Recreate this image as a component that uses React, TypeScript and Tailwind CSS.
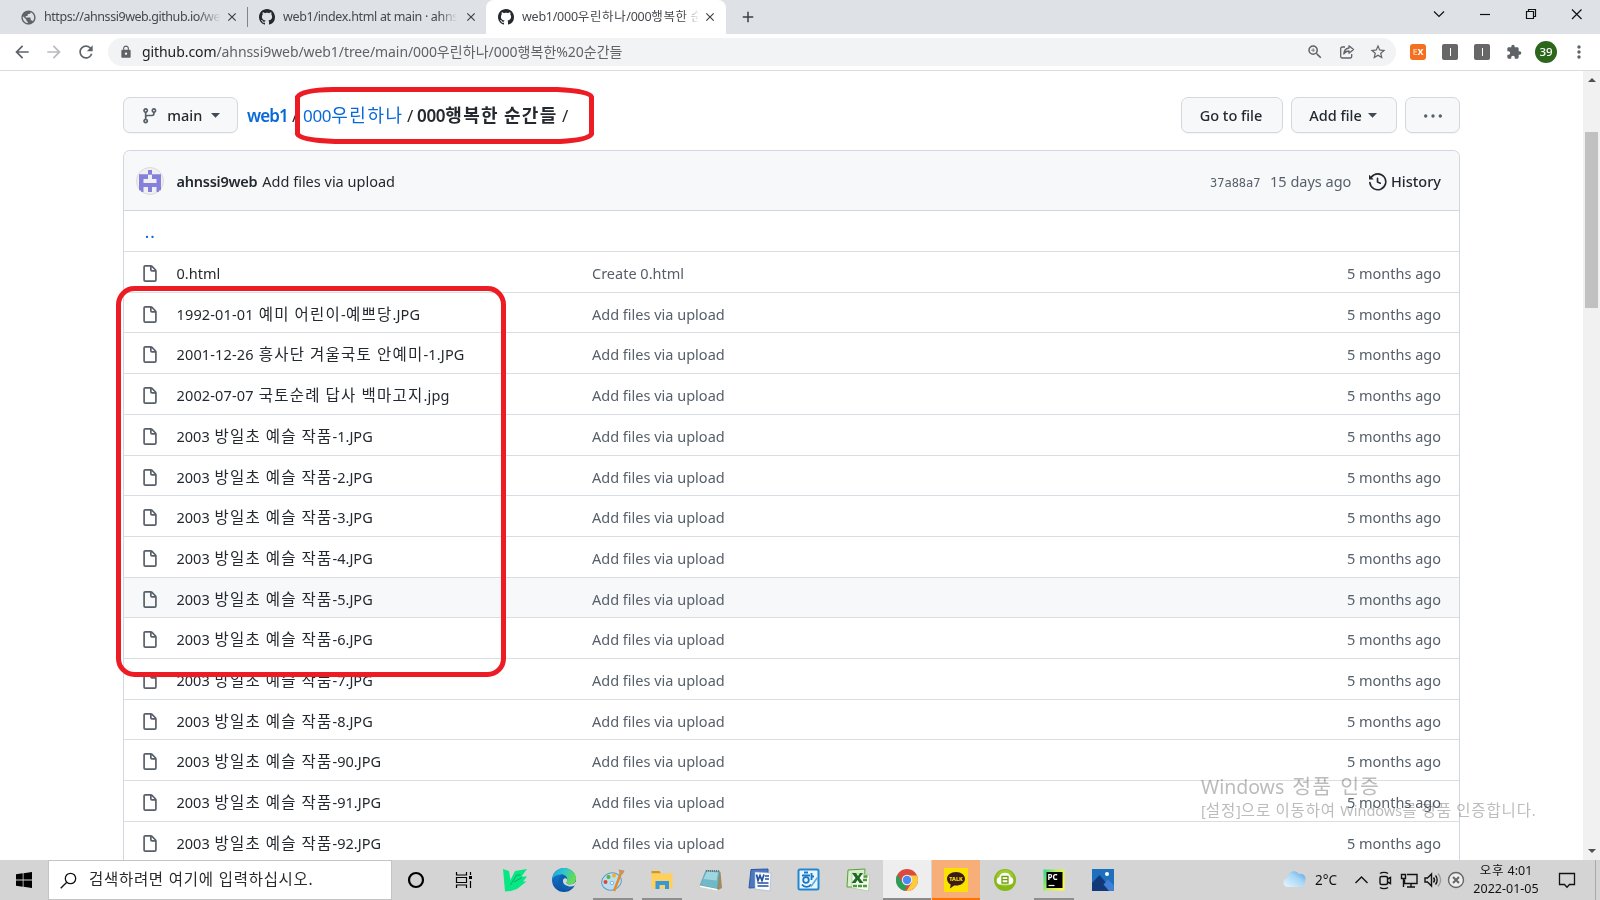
import React from "react";
import {
  MdArrowBack, MdArrowForward, MdClose, MdExtension, MdLock, MdMoreVert,
  MdAdd, MdPublic, MdRefresh, MdStarBorder, MdZoomIn,
} from "react-icons/md";

const FILE_PATH =
  "M3.75 1.5a.25.25 0 00-.25.25v11.5c0 .138.112.25.25.25h8.5a.25.25 0 00.25-.25V6H9.75A1.75 1.75 0 018 4.25V1.5H3.75zm5.75.56v2.19c0 .138.112.25.25.25h2.19L9.5 2.06zM2 1.75C2 .784 2.784 0 3.75 0h5.086c.464 0 .909.184 1.237.513l3.414 3.414c.329.328.513.773.513 1.237v8.086A1.75 1.75 0 0112.25 15h-8.5A1.75 1.75 0 012 13.25V1.75z";
const BRANCH_PATH =
  "M11.75 2.5a.75.75 0 100 1.5.75.75 0 000-1.5zm-2.25.75a2.25 2.25 0 113 2.122V6A2.5 2.5 0 0110 8.5H6a1 1 0 00-1 1v1.128a2.251 2.251 0 11-1.5 0V5.372a2.25 2.25 0 111.5 0v1.836A2.492 2.492 0 016 7h4a1 1 0 001-1v-.628A2.25 2.25 0 019.5 3.25zM4.25 12a.75.75 0 100 1.5.75.75 0 000-1.5zM3.5 3.25a.75.75 0 111.5 0 .75.75 0 01-1.5 0z";
const HISTORY_PATH =
  "M1.643 3.143L.427 1.927A.25.25 0 000 2.104V5.75c0 .138.112.25.25.25h3.646a.25.25 0 00.177-.427L2.715 4.215a6.5 6.5 0 11-1.18 4.458.75.75 0 10-1.493.154 8.001 8.001 0 101.6-5.684zM7.75 4a.75.75 0 01.75.75v2.992l2.028.812a.75.75 0 01-.557 1.392l-2.5-1A.75.75 0 017 8.25v-3.5A.75.75 0 017.75 4z";
const GITHUB_PATH =
  "M8 0C3.58 0 0 3.58 0 8c0 3.54 2.29 6.53 5.47 7.59.4.07.55-.17.55-.38 0-.19-.01-.82-.01-1.49-2.01.37-2.53-.49-2.69-.94-.09-.23-.48-.94-.82-1.13-.28-.15-.68-.52-.01-.53.63-.01 1.08.58 1.23.82.72 1.21 1.87.87 2.33.66.07-.52.28-.87.51-1.07-1.78-.2-3.64-.89-3.64-3.95 0-.87.31-1.59.82-2.15-.08-.2-.36-1.02.08-2.12 0 0 .67-.21 2.2.82.64-.18 1.32-.27 2-.27.68 0 1.36.09 2 .27 1.53-1.04 2.2-.82 2.2-.82.44 1.1.16 1.92.08 2.12.51.56.82 1.27.82 2.15 0 3.07-1.87 3.75-3.65 3.95.29.25.54.73.54 1.48 0 1.07-.01 1.93-.01 2.2 0 .21.15.46.55.38A8.013 8.013 0 0016 8c0-4.42-3.58-8-8-8z";

function Octicon({ d, className }: { d: string; className: string }) {
  return (
    <svg viewBox="0 0 16 16" fill="currentColor" fillRule="evenodd" className={className}>
      <path d={d} />
    </svg>
  );
}

/* Hangul runs are set a little wider than the Latin text around them. */
function Mixed({ text, hangul }: { text: string; hangul: string }) {
  return (
    <>
      {text.split(/([\uac00-\ud7a3]+)/).map((part, i) =>
        i % 2 ? <span key={i} className={hangul}>{part}</span> : part
      )}
    </>
  );
}

/* ---------- browser chrome ---------- */

function TabStrip() {
  return (
    <div className="flex h-[34px] shrink-0 items-stretch bg-[#dee1e6] text-[12.5px] text-[#45494d]">
      <div className="flex w-[247px] items-center pl-5">
        <MdPublic className="size-[17px] shrink-0 text-[#5f6368]" />
        <span className="ml-[7px] w-[177px] overflow-hidden whitespace-nowrap tracking-[-0.450px] [mask-image:linear-gradient(to_right,black_88%,transparent)]">
          https://ahnssi9web.github.io/web1
        </span>
        <MdClose className="ml-1 size-[14px] shrink-0 text-[#3c4043]" stroke="currentColor" />
      </div>
      <div className="my-[7px] w-px bg-[#80868b]" />
      <div className="flex w-[238px] items-center pl-[11px]">
        <Octicon d={GITHUB_PATH} className="size-4 shrink-0 text-[#24292f]" />
        <span className="ml-2 w-[174px] overflow-hidden whitespace-nowrap tracking-[-0.330px] [mask-image:linear-gradient(to_right,black_90%,transparent)]">
          web1/index.html at main · ahnssi9web
        </span>
        <MdClose className="ml-[7px] size-[14px] shrink-0 text-[#3c4043]" stroke="currentColor" />
      </div>
      <div className="flex w-[240px] items-center rounded-t-[8px] bg-white pl-3">
        <Octicon d={GITHUB_PATH} className="size-4 shrink-0 text-[#24292f]" />
        <span className="ml-2 w-[177px] overflow-hidden whitespace-nowrap tracking-[-0.250px] [mask-image:linear-gradient(to_right,black_91%,transparent)]">
          <Mixed text="web1/000우린하나/000행복한 순간들" hangul="tracking-[0.600px]" />
        </span>
        <MdClose className="ml-1 size-[14px] shrink-0 text-[#3c4043]" stroke="currentColor" />
      </div>
      <div className="flex flex-1 items-center pl-[13px]">
        <MdAdd className="size-[18px] text-[#3c4043]" />
      </div>
      <svg viewBox="0 0 172 34" className="h-[34px] w-[172px] shrink-0" fill="none" stroke="#111" strokeWidth="1.2">
        <path d="M6 11.500l5 5 5-5" />
        <path d="M52 14.500h10" />
        <path d="M98.500 11.500h7v7h-7zM100.500 11.500v-2h7v7h-2" />
        <path d="M144 9.500l9.500 9.500m0-9.500l-9.500 9.500" />
      </svg>
    </div>
  );
}

function AddressBar() {
  return (
    <div className="flex h-[37px] shrink-0 items-center border-b border-[#d9dbdd] bg-white pl-3 pr-[11px] text-[#5f6368]">
      <MdArrowBack className="size-5" />
      <MdArrowForward className="ml-3 size-5 text-[#b9bbbe]" />
      <MdRefresh className="ml-3 size-5" />
      <div className="ml-[12px] flex h-7 w-[1288px] items-center rounded-full bg-[#f1f3f4] pl-[11px] pr-[9px] text-[14px]">
        <MdLock className="size-[14px]" />
        <span className="mt-[-1px] ml-[9px] tracking-[-0.080px]">
          <span className="text-[#202124]">github.com</span>
          <Mixed text="/ahnssi9web/web1/tree/main/000우린하나/000행복한%20순간들" hangul="tracking-[0.050px]" />
        </span>
        <MdZoomIn className="ml-auto size-[18px]" />
        <svg viewBox="0 0 16 16" className="ml-[15px] size-4" fill="none" stroke="currentColor" strokeWidth="1.3" strokeLinejoin="round">
          <path d="M6 3H3.200a1.500 1.500 0 0 0-1.500 1.500v8a1.500 1.500 0 0 0 1.500 1.500h8a1.500 1.500 0 0 0 1.500-1.500V10" />
          <path d="M10 1.800L14.500 5.500 10 9.200V7C7.500 7 6 8 4.800 10 5 6.500 7 4.500 10 4z" />
        </svg>
        <MdStarBorder className="ml-[14px] size-[18px]" />
      </div>
      <div className="ml-[14px] flex size-4 items-center justify-center rounded-[3px] bg-[#f4701e] text-[9px] font-bold text-white">
        <span className="text-[#fbc39d]">E</span>X
      </div>
      <div className="ml-4 flex size-4 items-center justify-center rounded-[2px] bg-[#676767]"><div className="h-2 w-px bg-white" /></div>
      <div className="ml-4 flex size-4 items-center justify-center rounded-[2px] bg-[#676767]"><div className="h-2 w-px bg-white" /></div>
      <MdExtension className="ml-4 size-4" />
      <div className="ml-[13px] flex size-[22px] items-center justify-center rounded-full bg-[#2d671e] text-[11.500px] font-medium text-white">39</div>
      <MdMoreVert className="ml-[12px] size-5" />
    </div>
  );
}

function Scrollbar() {
  return (
    <div className="flex w-[17px] shrink-0 flex-col items-center bg-[#f1f1f1]">
      <svg viewBox="0 0 8 4" className="mt-[7px] h-1 w-2"><path d="M0 4L4 0l4 4z" fill="#505050" /></svg>
      <div className="mt-[50px] h-[176px] w-[13px] bg-[#c1c1c1]" />
      <svg viewBox="0 0 8 4" className="mb-[7px] mt-auto h-1 w-2"><path d="M0 0l4 4 4-4z" fill="#505050" /></svg>
    </div>
  );
}

/* ---------- repository page ---------- */

const FILES = [
  "0.html",
  "1992-01-01 예미 어린이-예쁘당.JPG",
  "2001-12-26 흥사단 겨울국토 안예미-1.JPG",
  "2002-07-07 국토순례 답사 백마고지.jpg",
  "2003 방일초 예슬 작품-1.JPG",
  "2003 방일초 예슬 작품-2.JPG",
  "2003 방일초 예슬 작품-3.JPG",
  "2003 방일초 예슬 작품-4.JPG",
  "2003 방일초 예슬 작품-5.JPG",
  "2003 방일초 예슬 작품-6.JPG",
  "2003 방일초 예슬 작품-7.JPG",
  "2003 방일초 예슬 작품-8.JPG",
  "2003 방일초 예슬 작품-90.JPG",
  "2003 방일초 예슬 작품-91.JPG",
  "2003 방일초 예슬 작품-92.JPG",
];
const SHORT_ROWS = [1, 5, 8, 11];
const HOVERED = 8;

const BUTTON = "flex h-9 items-center justify-center rounded-[7px] border border-[#d5d8da] bg-[#f6f8fa] pt-px font-medium text-[#24292f] shadow-[0_1px_0_rgba(27,31,36,0.04)]";

function Caret({ className }: { className: string }) {
  return <svg viewBox="0 0 9 5" className={className}><path d="M0 0h9L4.500 4.700z" fill="#424a53" /></svg>;
}

function Toolbar() {
  return (
    <div className="flex h-9 items-center">
      <button className={BUTTON + " w-[115px]"}>
        <Octicon d={BRANCH_PATH} className="size-[17.6px] text-[#57606a]" />
        <span className="ml-[9px]">main</span>
        <Caret className="ml-[9px] h-[5px] w-[9px]" />
      </button>
      <div className="ml-[9px] flex items-baseline whitespace-nowrap pt-px text-[17px]">
        <span className="w-[45px] tracking-[-0.900px] font-semibold text-[#0969da]">web1</span>
        <span className="w-[11px]">/</span>
        <span className="w-[104px] tracking-[-0.3px] text-[#0969da]"><Mixed text="000우린하나" hangul="text-[18px] tracking-[1.500px]" /></span>
        <span className="w-[10px]">/</span>
        <span className="w-[145px] tracking-[-0.3px] font-semibold [word-spacing:1px]"><Mixed text="000행복한 순간들" hangul="text-[18px] tracking-[1.300px] font-bold" /></span>
        <span>/</span>
      </div>
      <button className={BUTTON + " ml-auto w-[102px] pr-[2px]"}>Go to file</button>
      <button className={BUTTON + " ml-2 w-[106px] pr-[2px]"}>Add file<Caret className="ml-[6px] h-[5px] w-[9px]" /></button>
      <button className={BUTTON + " ml-2 w-[55px]"}>
        <svg viewBox="0 0 18 4" className="h-1 w-[18px]" fill="#57606a"><circle cx="1.700" cy="2" r="1.700" /><circle cx="9" cy="2" r="1.700" /><circle cx="16.300" cy="2" r="1.700" /></svg>
      </button>
    </div>
  );
}

function Avatar() {
  return (
    <svg viewBox="0 0 28 28" className="size-7">
      <circle cx="14" cy="14" r="13.500" fill="#f0f0f0" stroke="#d8dade" />
      <path fill="#8580dc" fillRule="evenodd" d="M12 3h4v4.300h9v16h-1.500l-1 1.700H20.500v-5H16v5h-4v-5H7.500v5h-2l-1-1.700H3v-16h9zM12 7.800V12H7.500v4h13v-4H16V7.800z" />
    </svg>
  );
}

function Row({ name, index }: { name: string; index: number }) {
  return (
    <div
      className={
        "flex shrink-0 items-center border-t border-[#d8dee4] pl-[17px] pr-[18px] " +
        (SHORT_ROWS.includes(index) ? "h-10 " : "h-[41px] ") +
        (index === HOVERED ? "bg-[#f6f8fa]" : "")
      }
    >
      <Octicon d={FILE_PATH} className="mt-[4px] size-[18px] shrink-0 text-[#57606a]" />
      <span
        className={
          "ml-[17.500px] mt-[2px] w-[415px] whitespace-nowrap leading-[22px] text-[#24292f] [word-spacing:1px] " +
          (index >= 1 && index <= 3 ? "tracking-[0.150px]" : "")
        }
      >
        <Mixed text={name} hangul="text-[15.500px] tracking-[1.240px]" />
      </span>
      <span className="ml-[0.500px] mt-[2px] leading-[22px] text-[#57606a]">{index === 0 ? "Create 0.html" : "Add files via upload"}</span>
      <span className="ml-auto mt-[2px] leading-[22px] text-[#57606a]">5 months ago</span>
    </div>
  );
}

function Page() {
  return (
    <div className="flex-1 overflow-hidden bg-white pl-[123px] pr-[123px] pt-[26px] text-[14.500px] text-[#24292f]">
      <Toolbar />
      <div className="mt-[17px] flex w-[1337px] flex-col rounded-t-[7px] border-x border-t border-[#d0d7de]">
        <div className="flex h-[59px] shrink-0 items-center rounded-t-[6px] bg-[#f6f8fa] pl-3 pr-[18px]">
          <Avatar />
          <span className="ml-[12.500px] mt-[3px] font-semibold tracking-[-0.250px]">ahnssi9web</span>
          <span className="ml-[5px] mt-[3px]">Add files via upload</span>
          <span className="ml-auto mt-[4px] font-['DejaVu_Sans_Mono'] text-[12px] text-[#57606a]">37a88a7</span>
          <span className="ml-[9.500px] mt-[3px] text-[#57606a]">15 days ago</span>
          <Octicon d={HISTORY_PATH} className="ml-[18px] mt-[3px] size-[17.600px]" />
          <span className="ml-[4px] mt-[3px] font-medium">History</span>
        </div>
        <div className="flex h-[41px] shrink-0 items-center border-t border-[#d0d7de] pl-[21px] pt-[4px] font-semibold tracking-[1.500px] text-[#0969da]">..</div>
        {FILES.map((name, i) => <Row key={name} name={name} index={i} />)}
      </div>
    </div>
  );
}

/* ---------- overlays ---------- */

function Marks() {
  return (
    <svg viewBox="0 0 1600 860" className="pointer-events-none absolute left-0 top-0 h-[860px] w-[1600px]" fill="none" stroke="#ed1c24" strokeWidth="5">
      <path d="M333 89.500H557Q590 91 591.500 97V134Q588 140 560 141.500H335Q300 140 297.500 134V97Q302 90 333 89.500Z" />
      <rect x="118.500" y="288.500" width="385" height="386" rx="16" />
    </svg>
  );
}

function Watermark() {
  return (
    <div className="pointer-events-none absolute left-[1201px] top-[772px] whitespace-nowrap text-[#bcbcbc] mix-blend-multiply">
      <div className="text-[19.500px] leading-[28px] [word-spacing:3px]"><Mixed text="Windows 정품 인증" hangul="text-[20.500px] tracking-[1px]" /></div>
      <div className="text-[14.500px] leading-[18px] [word-spacing:0.5px]"><Mixed text="[설정]으로 이동하여 Windows를 정품 인증합니다." hangul="text-[15.500px] tracking-[0.880px]" /></div>
    </div>
  );
}

/* ---------- taskbar ---------- */

function Slot({ children, tone = "" }: { children: React.ReactNode; tone?: string }) {
  return (
    <div className={"flex h-10 w-12 shrink-0 flex-col items-center justify-between pt-2 " + (tone === "active" ? "bg-[#eeeeee]" : tone === "alert" ? "bg-[#f8ae78]" : "")}>
      <svg viewBox="0 0 24 24" className="size-6">{children}</svg>
      {tone === "active" && <div className="h-[2px] w-12 bg-[#8b8b8b]" />}
      {tone === "alert" && <div className="h-[2px] w-12 bg-[#ff7200]" />}
      {tone === "open" && <div className="h-[2px] w-10 bg-[#8f8f8f]" />}
    </div>
  );
}

function Apps() {
  return (
    <>
      <Slot><circle cx="12" cy="12" r="7" fill="none" stroke="#000" strokeWidth="2.200" /></Slot>
      <Slot>
        <g fill="none" stroke="#000" strokeWidth="1.200">
          <path d="M4.500 4v3h10V4M4.500 20v-3h10v3M4.500 9.500h10v5h-10zM18.500 4v3M18.500 13v7" />
          <path d="M17 9.500h3" strokeWidth="3" />
        </g>
      </Slot>
      <div className="ml-[3px] flex gap-px">
        <Slot>
          <path d="M0 1l6 2 1.500 9L12 3l12-2-5.500 7.500H24l-4 5h3.500L14 21l-6 2-6 .5z" fill="#07e884" />
          <path d="M7.500 17l6-10h4M11 14l8-4.500" fill="none" stroke="#0aa863" strokeWidth=".9" />
        </Slot>
        <Slot>
          <defs>
            <linearGradient id="edgeTop" x1="0" y1="0" x2="1" y2=".4"><stop offset="0" stopColor="#1a9fe0" /><stop offset=".5" stopColor="#2fc4cf" /><stop offset="1" stopColor="#65dc52" /></linearGradient>
            <linearGradient id="edgeLow" x1="0" y1="0" x2="0" y2="1"><stop offset="0" stopColor="#1583d8" /><stop offset="1" stopColor="#0b4f9f" /></linearGradient>
          </defs>
          <circle cx="12" cy="12" r="12" fill="url(#edgeLow)" />
          <path d="M0 11.500C.8 5 5.500 0 12 0c7 0 12 5 12 10.500 0 3.500-2.500 6-6 6-2 0-3.600-.7-3.600-1.800 0-.8 1-1.200 1-3C15.400 9 12.500 6.600 9 6.600 5 6.600 1.500 8.500 0 11.500z" fill="url(#edgeTop)" />
          <path d="M9 6.600C5 12 7 20 14 22c3 .5 5.500-1 8-4-5 2-11 0-11-4.500 0-2 1.500-3 4-2.500C15 8.500 12.500 6.600 9 6.600z" fill="#0d5fb0" />
          <path d="M15.400 11.700c0 1.800-1 2.200-1 3 0 1.100 1.600 1.800 3.600 1.800 2.300 0 4.300-1 5.400-2.800l1 .3-1.500 3.500c-5 2.500-12 0-12-4.500 0-2.500 2.500-4 4.500-1.300z" fill="#d4d4d4" />
        </Slot>
        <Slot tone="open">
          <ellipse cx="10.500" cy="13.500" rx="10" ry="8.500" fill="#b9def2" stroke="#5b9cc8" transform="rotate(-20 10.500 13.500)" />
          <circle cx="4.500" cy="14" r="2" fill="#e2452f" /><circle cx="7.500" cy="9" r="2" fill="#5cb531" />
          <circle cx="13" cy="7.500" r="2" fill="#f3b21a" /><circle cx="11" cy="15" r="1.700" fill="#eef7fc" stroke="#5b9cc8" strokeWidth=".7" />
          <path d="M20 5l-7 18" stroke="#e8892b" strokeWidth="2.500" /><path d="M17.500 1.500l6 1-1.500 3.500-3 1z" fill="#c7955e" />
        </Slot>
        <Slot tone="open">
          <path d="M1.500 3h8l1.500 2.500H1.500z" fill="#d9970c" /><path d="M1.500 5.500H22.500v15h-21z" fill="#ffd15c" />
          <path d="M5.500 21v-8h13.500v8h-4v-4h-5.500v4z" fill="#3597dc" />
        </Slot>
        <Slot>
          <path d="M7 3l14.500 1L23 20l-4 2z" fill="#a58a5c" /><path d="M7 2.500l13.500 1L18.500 21 1 17.500z" fill="#6fb9c8" stroke="#57909b" strokeWidth=".6" />
          <path d="M8 3.500l11 1-1.500 8L4.500 11z" fill="#9fd6df" /><path d="M1 17.500l17.500 3.500-.2 1.500L1 19z" fill="#fff" /><path d="M7 2.800h13" stroke="#555" strokeWidth="1.200" strokeDasharray="1 1" />
        </Slot>
        <Slot>
          <path d="M3 1.500L20 1v18L1 20z" fill="#4c78bf" stroke="#2d57a0" /><path d="M7 4l16 1-1 18-15-2z" fill="#fafcff" stroke="#9bb0d0" strokeWidth=".6" />
          <path d="M8.500 6.500l1.500 6 2-5 2 5 2-6" fill="none" stroke="#234f9f" strokeWidth="1.700" /><path d="M17 8h4M17 11h4M9.500 15h11M9.500 18h11" stroke="#234f9f" strokeWidth="1.500" />
        </Slot>
        <Slot>
          <rect x="1.500" y="1.500" width="20" height="20" rx="1.500" fill="#eaf6ff" stroke="#2287cf" strokeWidth="2" />
          <path d="M7 4.500h4M5 7.500h8M14.500 5v7M14.500 8.500h2.500" stroke="#1876c2" strokeWidth="1.800" /><circle cx="9" cy="12" r="2.800" fill="none" stroke="#1876c2" strokeWidth="1.800" />
          <path d="M5 16.500c2 3 7 3.500 9 0" fill="none" stroke="#1876c2" strokeWidth="1.800" /><path d="M20.500 9.500l-6.500 9" stroke="#5fa9dc" strokeWidth="1.600" />
        </Slot>
        <Slot>
          <path d="M2 2l17-1-1 18H1z" fill="#d8efcb" stroke="#56a336" /><path d="M6 5l17.500 2-1 16L6 20z" fill="#f7fbf5" stroke="#a2bd96" strokeWidth=".6" />
          <path d="M6 5h4l2 3 2-3h3l-3.500 5 4 5h-4l-2-3-2 3H5.500l4-5z" fill="#1f6b20" /><path d="M17.500 8.500h4.500M17 12h5M7 18h14" stroke="#4b9b35" strokeWidth="2.600" strokeDasharray="4 1" />
        </Slot>
        <Slot tone="active">
          <circle cx="12" cy="12" r="11" fill="#dc4a3e" />
          <path d="M2.500 6.500L7.300 14.700 12 17l-2.300 5.800A11 11 0 0 1 2.500 6.500z" fill="#28a05a" />
          <path d="M22 7.500H12l4.700 7.200L11.500 23A11 11 0 0 0 22 7.500z" fill="#fdcc3e" />
          <circle cx="12" cy="12" r="5.200" fill="#f2f2f2" /><circle cx="12" cy="12" r="4.200" fill="#4a8af4" />
        </Slot>
        <Slot tone="alert">
          <rect width="24" height="24" fill="#fbe100" />
          <path d="M12 4c5.200 0 9 3 9 6.800s-3.800 6.800-9 6.800l-2-.1L6 20.500l.7-4C4.400 15.300 3 13.200 3 10.800 3 7 6.800 4 12 4z" fill="#391b1b" />
          <text x="12" y="13" textAnchor="middle" fontSize="5.500" fontWeight="800" fill="#fbe100">TALK</text>
        </Slot>
        <Slot>
          <circle cx="12" cy="12" r="11" fill="#86b816" /><circle cx="12" cy="10" r="8.500" fill="#9cca2d" />
          <path d="M7 16.500a3.700 3.700 0 0 1-.8-7.200 6 6 0 0 1 11.600 0A3.700 3.700 0 0 1 17 16.500z" fill="#fff" />
          <path d="M9 8.500h6v6.500H9zM9 11.700h6" fill="none" stroke="#6f9e10" strokeWidth="1.300" />
        </Slot>
        <Slot tone="open">
          <defs><linearGradient id="py" x1="0" y1="0" x2="1" y2=".5"><stop offset="0" stopColor="#21d789" /><stop offset=".5" stopColor="#b6ee5f" /><stop offset="1" stopColor="#fcf84a" /></linearGradient></defs>
          <path d="M1.500 1.500h21v21h-21z" fill="url(#py)" /><rect x="4.500" y="4" width="16" height="16" fill="#000" />
          <text x="5.600" y="12" fontSize="8" fontWeight="700" fill="#fff">PC</text><path d="M6.500 17.500h6" stroke="#fff" strokeWidth="1.200" />
        </Slot>
        <Slot>
          <rect x="1" y="1" width="22" height="22" fill="#1f6fbf" /><path d="M1 15l7.500-8L22 23H1z" fill="#123a78" /><path d="M12.500 16.500l4.500-5 6 6v5.500h-5z" fill="#3f7fd6" /><circle cx="16" cy="6" r="2" fill="#fff" />
        </Slot>
      </div>
    </>
  );
}

function Tray() {
  return (
    <div className="ml-auto flex h-10 items-center text-[#111]">
      <svg viewBox="0 0 24 18" className="h-[18px] w-6">
        <defs><linearGradient id="cl" x1="0" y1="1" x2="1" y2="0"><stop offset="0" stopColor="#e8f6ff" /><stop offset=".6" stopColor="#a5d5f5" /><stop offset="1" stopColor="#4c9be0" /></linearGradient></defs>
        <path d="M5 16a4.500 4.500 0 0 1 0-9A6 6 0 0 1 16 3a5 5 0 0 1 6 7c0 4-2 6-5 6z" fill="url(#cl)" />
      </svg>
      <span className="ml-[8px] mt-px w-[38px] text-[13.500px]">2°C</span>
      <svg viewBox="0 0 117 24" className="h-6 w-[117px]" fill="none" stroke="#111" strokeWidth="1.400">
        <path d="M2.500 15l6-6 6 6" />
        <rect x="27" y="8.500" width="7.500" height="8" rx="1.500" /><path d="M34.500 11l3-1.500v6l-3-1.500M27 5.500c2-1.500 6-1.500 8 0M27 19.500c2 1.500 6 1.500 8 0" />
        <path d="M54 6.500h10v9H51.500v-4M58 15.500v3M54 19h8M48.500 6.500h4v4h-4zM50.500 10.500v8.500" />
        <path d="M72 10h2.500l4-4v12l-4-4H72zM80.500 9.500c1.200 1.500 1.200 3.500 0 5M82.500 7.500c2.200 2.500 2.200 6.500 0 9" /><path d="M85 5.500c3.200 4 3.200 9 0 13" stroke="#999" />
        <circle cx="103" cy="12" r="7.500" fill="#eee" stroke="#666" /><path d="M100 9l6 6m0-6l-6 6" stroke="#666" strokeWidth="2" />
      </svg>
      <div className="flex w-[70px] flex-col items-center whitespace-nowrap pl-[2px] text-[12.500px] leading-[18px]">
        <span><Mixed text="오후 4:01" hangul="tracking-[0.800px]" /></span>
        <span>2022-01-05</span>
      </div>
      <svg viewBox="0 0 18 18" className="ml-[18px] size-[18px]" fill="none" stroke="#111" strokeWidth="1.300"><path d="M1.500 2.500h15v11h-5l-2.500 2.800-2.500-2.800h-5z" /></svg>
      <div className="ml-[19px] mr-1 h-10 w-px bg-[#a9a9a9]" />
    </div>
  );
}

function Taskbar() {
  return (
    <div className="flex h-10 shrink-0 items-center bg-[#d4d4d4]">
      <svg viewBox="0 0 16 16" className="ml-4 size-4"><path d="M0 2.200l6.700-.9v6.300H0zM7.500 1.200L16 0v7.600H7.500zM0 8.400h6.700v6.300L0 13.800zM7.500 8.400H16V16l-8.500-1.200z" /></svg>
      <div className="ml-4 flex h-10 w-[344px] items-center border border-[#c4c4c4] bg-white pl-[11px] text-[15.500px] text-[#2b2b2b]">
        <svg viewBox="0 0 17 17" className="size-[17px]" fill="none" stroke="#111" strokeWidth="1.300"><circle cx="10.500" cy="6.500" r="5.200" /><path d="M6.800 10.200L.7 16.300" /></svg>
        <span className="ml-[12px] [word-spacing:1px]"><Mixed text="검색하려면 여기에 입력하십시오." hangul="tracking-[0.700px]" /></span>
      </div>
      <Apps />
      <Tray />
    </div>
  );
}

export default function App() {
  return (
    <div className="relative flex h-[900px] w-[1600px] flex-col overflow-hidden bg-white font-['Noto_Sans','Noto_Sans_CJK_KR',sans-serif]">
      <TabStrip />
      <AddressBar />
      <div className="flex min-h-0 flex-1">
        <Page />
        <Scrollbar />
      </div>
      <Taskbar />
      <Marks />
      <Watermark />
    </div>
  );
}
